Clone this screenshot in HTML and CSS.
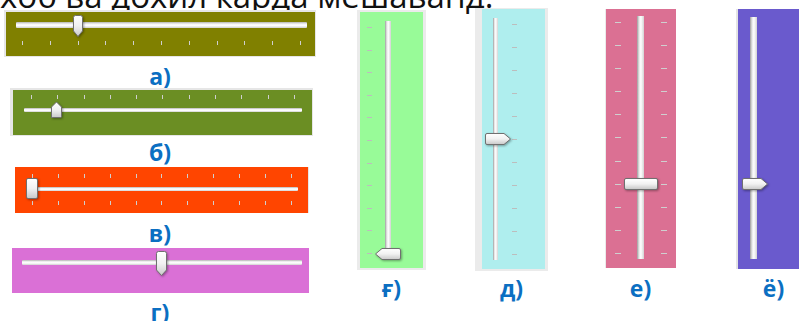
FILE: index.html
```html
<html>

<head>
    <link rel="stylesheet" href="styles.css">
    <title>Слайдерҳо</title>
</head>

<body>
    <svg class="defs" width="0" height="0">
        <defs>
            <linearGradient id="knob" x1="0" y1="0" x2="0" y2="1">
                <stop offset="0" stop-color="#ffffff" />
                <stop offset="0.5" stop-color="#f1f1f1" />
                <stop offset="1" stop-color="#c9c9c9" />
            </linearGradient>
        </defs>
    </svg>

    <p class="title">хоб ва дохил карда мешаванд.</p>

    <div class="board">
        <!-- horizontal sliders -->
        <div class="hcol">
            <div class="hs hs-a">
                <div class="track"></div>
                <div class="ticks"><i></i><i></i><i></i><i></i><i></i><i></i><i></i><i></i><i></i><i></i><i></i></div>
                <svg class="knob" style="left:66px" width="12" height="23" viewBox="0 0 12 23">
                    <path d="M1.5 2.5Q1.5 .5 3.5 .5H8.5Q10.5 .5 10.5 2.5V16L6 21.5 1.5 16Z" />
                </svg>
            </div>
            <div class="cap cap-a">а)</div>

            <div class="hs hs-b">
                <div class="ticks"><i></i><i></i><i></i><i></i><i></i><i></i><i></i><i></i><i></i><i></i><i></i></div>
                <div class="track"></div>
                <svg class="knob" style="left:37px" width="13" height="18" viewBox="0 0 13 18">
                    <path d="M1.5 16.5V6L6.5 1 11.5 6V15.5Q11.5 16.5 10.5 16.5H2.5Q1.5 16.5 1.5 15.5Z" />
                </svg>
            </div>
            <div class="cap cap-b">б)</div>

            <div class="hs hs-c">
                <div class="ticks"><i></i><i></i><i></i><i></i><i></i><i></i><i></i><i></i><i></i><i></i><i></i></div>
                <div class="track"></div>
                <div class="ticks"><i></i><i></i><i></i><i></i><i></i><i></i><i></i><i></i><i></i><i></i><i></i></div>
                <div class="knob box-knob" style="left:11px"></div>
            </div>
            <div class="cap cap-c">в)</div>

            <div class="hs hs-d">
                <div class="track"></div>
                <svg class="knob" style="left:143px" width="13" height="26" viewBox="0 0 13 26">
                    <path d="M1.5 2.5Q1.5 .5 3.5 .5H9.5Q11.5 .5 11.5 2.5V19L6.5 24.5 1.5 19Z" />
                </svg>
            </div>
            <div class="cap cap-d">г)</div>
        </div>

        <!-- vertical sliders -->
        <div class="vrow">
            <div class="vitem vi-g">
                <div class="vs vs-g">
                    <div class="vticks"><i></i><i></i><i></i><i></i><i></i><i></i><i></i><i></i><i></i><i></i><i></i></div>
                    <div class="vtrack"></div>
                    <svg class="knob" style="top:236px" width="26" height="12" viewBox="0 0 26 12">
                        <path d="M25.5 2Q25.5 .5 24 .5H7L.5 6 7 11.5H24Q25.5 11.5 25.5 10Z" />
                    </svg>
                </div>
                <div class="cap">ғ)</div>
            </div>

            <div class="vitem vi-h">
                <div class="vs vs-h">
                    <div class="vtrack"></div>
                    <div class="vticks"><i></i><i></i><i></i><i></i><i></i><i></i><i></i><i></i><i></i><i></i><i></i></div>
                    <svg class="knob" style="top:124px" width="26" height="12" viewBox="0 0 26 12">
                        <path d="M.5 2Q.5 .5 2 .5H19L25.5 6 19 11.5H2Q.5 11.5 .5 10Z" />
                    </svg>
                </div>
                <div class="cap">д)</div>
            </div>

            <div class="vitem vi-e">
                <div class="vs vs-e">
                    <div class="vticks"><i></i><i></i><i></i><i></i><i></i><i></i><i></i><i></i><i></i><i></i><i></i></div>
                    <div class="vtrack"></div>
                    <div class="vticks"><i></i><i></i><i></i><i></i><i></i><i></i><i></i><i></i><i></i><i></i><i></i></div>
                    <div class="knob wide-knob" style="top:169px"></div>
                </div>
                <div class="cap">е)</div>
            </div>

            <div class="vitem vi-yo">
                <div class="vs vs-yo">
                    <div class="vtrack"></div>
                    <svg class="knob" style="top:169px" width="26" height="12" viewBox="0 0 26 12">
                        <path d="M.5 2Q.5 .5 2 .5H19L25.5 6 19 11.5H2Q.5 11.5 .5 10Z" />
                    </svg>
                </div>
                <div class="cap">ё)</div>
            </div>
        </div>
    </div>
</body>

</html>
```

FILE: styles.css
```css
html,
body {
    margin: 0;
    overflow: hidden;
    background: #fff;
}

body {
    font-family: "Open Sans", "DejaVu Sans", sans-serif;
}

.defs {
    position: absolute;
    width: 0;
    height: 0;
}

.title {
    margin: -16px 0 0;
    height: 24px;
    line-height: 24px;
    font-size: 33px;
    white-space: nowrap;
    color: #111;
}

.board {
    display: flex;
    align-items: flex-start;
}

.cap {
    height: 20px;
    text-align: center;
    font-weight: 700;
    font-size: 23px;
    line-height: 20px;
    color: #0b6fc2;
}

/* knobs */

.knob {
    position: absolute;
    filter: drop-shadow(1px 1px 1px rgba(0, 0, 0, .35));
}

.knob path {
    fill: url(#knob);
    stroke: #707070;
    stroke-width: 1;
}

.box-knob,
.wide-knob {
    box-sizing: border-box;
    border: 1px solid #707070;
    border-radius: 2px;
    background: linear-gradient(#fff, #f1f1f1 50%, #c9c9c9);
}

/* horizontal sliders */

.hcol {
    width: 320px;
    flex: none;
}

.hs {
    display: flow-root;
    position: relative;
    box-sizing: border-box;
    border: 0 solid #e6e6e6;
}

.track {
    background: linear-gradient(#b4b4b4, #f6f6f6 35%, #fff 60%, #cfcfcf);
    border-radius: 1px;
}

.ticks {
    display: flex;
    justify-content: space-between;
}

.ticks>i {
    width: 1px;
    height: 100%;
    background: #cfcfcf;
}

.hs-a {
    margin: 2px 0 0 4px;
    width: 312px;
    height: 47px;
    border-width: 2px 1px 1px 2px;
    background: #808000;
}

.hs-a .track {
    margin: 10px 8px 0 10px;
    height: 6px;
}

.hs-a .ticks {
    margin: 13px 14px 0 16px;
    height: 4px;
}

.hs-a .knob {
    top: 3px;
}

.cap-a {
    margin-top: 9px;
}

.hs-b {
    margin: 2px 0 0 10px;
    width: 303px;
    height: 48px;
    border-width: 2px 1px 1px 3px;
    background: #6b8e23;
}

.hs-b .ticks {
    margin: 5px 17px 0 18px;
    height: 4px;
}

.hs-b .track {
    margin: 9px 10px 0 11px;
    height: 4px;
}

.hs-b .knob {
    top: 11px;
}

.cap-b {
    margin-top: 6px;
}

.hs-c {
    margin: 5px 0 0 15px;
    width: 294px;
    height: 46px;
    border-width: 0 1px 0 0;
    background: #ff4500;
}

.hs-c .ticks {
    margin: 7px 16px 0 17px;
    height: 4px;
}

.hs-c .track {
    margin: 9px 10px 0 20px;
    height: 4px;
}

.hs-c .track+.ticks {
    margin-top: 10px;
}

.hs-c .knob {
    top: 11px;
    width: 12px;
    height: 21px;
}

.cap-c {
    margin-top: 10px;
}

.hs-d {
    margin: 5px 0 0 12px;
    width: 297px;
    height: 45px;
    background: #da70d6;
}

.hs-d .track {
    margin: 12px 7px 0 10px;
    height: 5px;
}

.hs-d .knob {
    top: 3px;
}

.cap-d {
    margin-top: 9px;
}

/* vertical sliders */

.vrow {
    display: flex;
    align-items: flex-start;
    margin-left: 37px;
}

.vitem {
    flex: none;
}

.vs {
    position: relative;
    box-sizing: border-box;
    display: flex;
    align-items: flex-start;
    border: 0 solid #ebebeb;
}

.vtrack {
    flex: none;
    background: linear-gradient(to right, #9c9c9c, #e6e6e6 30%, #fff 55%, #d2d2d2);
}

.vticks {
    flex: none;
    display: flex;
    flex-direction: column;
    justify-content: space-between;
}

.vticks>i {
    height: 1px;
    background: #bdbdbd;
}

.vi-g {
    margin-top: 2px;
}

.vs-g {
    width: 69px;
    height: 260px;
    border-width: 2px 3px;
    background: #98fb98;
}

.vs-g .vticks {
    margin: 15px 0 0 7px;
    width: 5px;
    height: 227px;
}

.vs-g .vtrack {
    margin: 9px 0 0 13px;
    width: 6px;
    height: 234px;
}

.vs-g .knob {
    left: 15px;
}

.vs-g+.cap {
    margin-top: 8px;
}

.vi-h {
    margin-left: 49px;
}

.vs-h {
    width: 73px;
    height: 263px;
    border-width: 1px 3px 2px 7px;
    background: #afeeee;
}

.vs-h .vtrack {
    margin: 9px 0 0 11px;
    width: 5px;
    height: 242px;
}

.vs-h .vticks {
    margin: 15px 0 0 14px;
    width: 5px;
    height: 231px;
}

.vs-h .knob {
    left: 3px;
}

.vs-h+.cap {
    margin-top: 7px;
}

.vi-e {
    margin: 1px 0 0 57px;
}

.vs-e {
    width: 71px;
    height: 259px;
    border-width: 0 0 0 1px;
    background: #db7093;
}

.vs-e .vticks {
    margin: 13px 0 0 9px;
    width: 6px;
    height: 232px;
}

.vs-e .vticks>i {
    background: #cfcfcf;
}

.vs-e .vtrack {
    margin: 7px 0 0 16px;
    width: 7px;
    height: 243px;
}

.vs-e .vtrack+.vticks {
    margin-left: 17px;
}

.vs-e .knob {
    left: 18px;
    width: 34px;
    height: 12px;
}

.vs-e+.cap {
    margin-top: 10px;
}

.vi-yo {
    margin: 1px 0 0 60px;
}

.vs-yo {
    width: 75px;
    height: 260px;
    border-width: 0 0 0 2px;
    border-color: #e4e4e4;
    background: #6a5acd;
}

.vs-yo .vtrack {
    margin: 8px 0 0 12px;
    width: 7px;
    height: 242px;
}

.vs-yo .knob {
    left: 4px;
}

.vs-yo+.cap {
    margin-top: 9px;
}
```
